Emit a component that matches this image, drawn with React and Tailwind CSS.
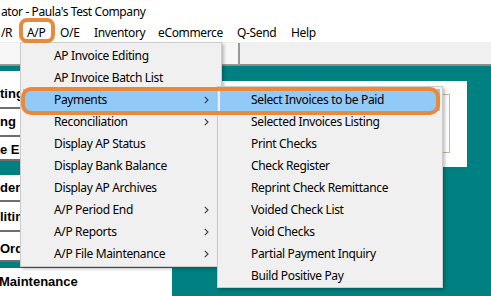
import React from "react";

const apItems = [
  { t: "AP Invoice Editing" },
  { t: "AP Invoice Batch List" },
  { t: "Payments", sub: true, hl: true },
  { t: "Reconciliation", sub: true },
  { t: "Display AP Status" },
  { t: "Display Bank Balance" },
  { t: "Display AP Archives" },
  { t: "A/P Period End", sub: true },
  { t: "A/P Reports", sub: true },
  { t: "A/P File Maintenance", sub: true },
];

const payItems = [
  "Select Invoices to be Paid",
  "Selected Invoices Listing",
  "Print Checks",
  "Check Register",
  "Reprint Check Remittance",
  "Voided Check List",
  "Void Checks",
  "Partial Payment Inquiry",
  "Build Positive Pay",
];

const menuBar = [
  { t: "/R", w: "w-[20px]", pl: "pl-[1px]" },
  { t: "A/P", w: "w-[33px]", pl: "pl-[7px]" },
  { t: "O/E", w: "w-[34px]", pl: "pl-[7px]" },
  { t: "Inventory", w: "w-[64px]", pl: "pl-[7px]" },
  { t: "eCommerce", w: "w-[79px]", pl: "pl-[7px]" },
  { t: "Q-Send", w: "w-[54px]", pl: "pl-[7px]" },
  { t: "Help", w: "w-[39px]", pl: "pl-[7px]" },
];

function Chevron() {
  return (
    <svg width="5" height="8" viewBox="0 0 5 8" className="shrink-0">
      <path d="M0.8 0.8 L4 4 L0.8 7.2" fill="none" stroke="#3a3a3a" strokeWidth="1.1" />
    </svg>
  );
}

export default function App() {
  return (
    <div className="relative w-[491px] h-[296px] overflow-hidden bg-white text-[12px] tracking-[-0.35px] text-black font-['Noto_Sans',sans-serif]">
      {/* title bar */}
      <div className="h-[23px] flex items-center pl-[1px] whitespace-nowrap tracking-[-0.4px]">ator - Paula's Test Company</div>

      {/* menu bar */}
      <div className="h-[19px] flex items-center whitespace-nowrap">
        {menuBar.map((m) => (
          <div key={m.t} className={`${m.w} ${m.pl} shrink-0`}>{m.t}</div>
        ))}
      </div>

      {/* toolbar */}
      <div className="h-[24px] bg-[#f0f0f0] border-b-2 border-[#8c8c8c] flex items-start">
        <div className="w-[240px] h-[22px] mt-[1px] bg-[#f7f7f7] border-r-2 border-b border-[#9a9a9a]" />
      </div>

      {/* main teal area */}
      <div className="flex bg-[#008080] h-[230px]">
        <div className="w-[172px] shrink-0 flex flex-col pt-[5px] font-['Liberation_Sans',sans-serif] font-bold text-[13px] leading-[16px] tracking-normal whitespace-nowrap">
          <div className="h-[38px] bg-white border-b-2 border-[#6e6e6e] pt-[15px]">ting</div>
          <div className="h-[28px] bg-white border-b-2 border-[#6e6e6e] pt-[5px]">ng</div>
          <div className="h-[24px] bg-white border-b-2 border-[#6e6e6e] pt-[5px]">e E</div>
          <div className="h-[14px]" />
          <div className="h-[27px] bg-white border-b-2 border-[#6e6e6e] pt-[5px]">der</div>
          <div className="h-[30px] bg-white border-b-2 border-[#6e6e6e] pt-[7px]">litin</div>
          <div className="h-[30px] bg-white border-b-2 border-[#6e6e6e] pt-[9px]">Ord</div>
          <div className="h-[6px]" />
          <div className="flex-1 bg-white pt-[6px] -ml-[1px]">Maintenance</div>
        </div>
        <div className="ml-[28px] mt-[15px] w-[267px] h-[86px] bg-white pt-[13px] pl-[10px] pr-[17px]">
          <div className="h-[59px] border border-[#c9b98c]" />
        </div>
      </div>

      {/* A/P dropdown */}
      <div className="absolute left-[20px] top-[42px] w-[202px] h-[225px] bg-[#f0f0f0] border border-[#cccccc] shadow-[2px_2px_3px_rgba(0,0,0,0.25)] pt-[2px] whitespace-nowrap">
        {apItems.map((it) => (
          <div
            key={it.t}
            className={`h-[22px] mx-[2px] flex items-center pl-[31px] pr-[10px] ${it.hl ? "bg-[#91c9f7]" : ""}`}
          >
            <span className="flex-1">{it.t}</span>
            {it.sub ? <Chevron /> : null}
          </div>
        ))}
      </div>

      {/* Payments submenu */}
      <div className="absolute left-[217px] top-[86px] w-[226px] h-[202px] bg-[#f0f0f0] border border-[#cccccc] shadow-[2px_2px_3px_rgba(0,0,0,0.25)] pt-[2px] whitespace-nowrap">
        {payItems.map((t, i) => (
          <div
            key={t}
            className={`h-[22px] mx-[2px] flex items-center pl-[31px] ${i === 0 ? "bg-[#91c9f7]" : ""}`}
          >
            {t}
          </div>
        ))}
      </div>

      {/* annotations */}
      <div className="absolute left-[19px] top-[18px] w-[36px] h-[25px] rounded-[8px] border-[4px] border-[#e8893b]" />
      <div className="absolute left-[21px] top-[87px] w-[419px] h-[28px] rounded-[10px] border-[4px] border-[#e8893b]" />
    </div>
  );
}
